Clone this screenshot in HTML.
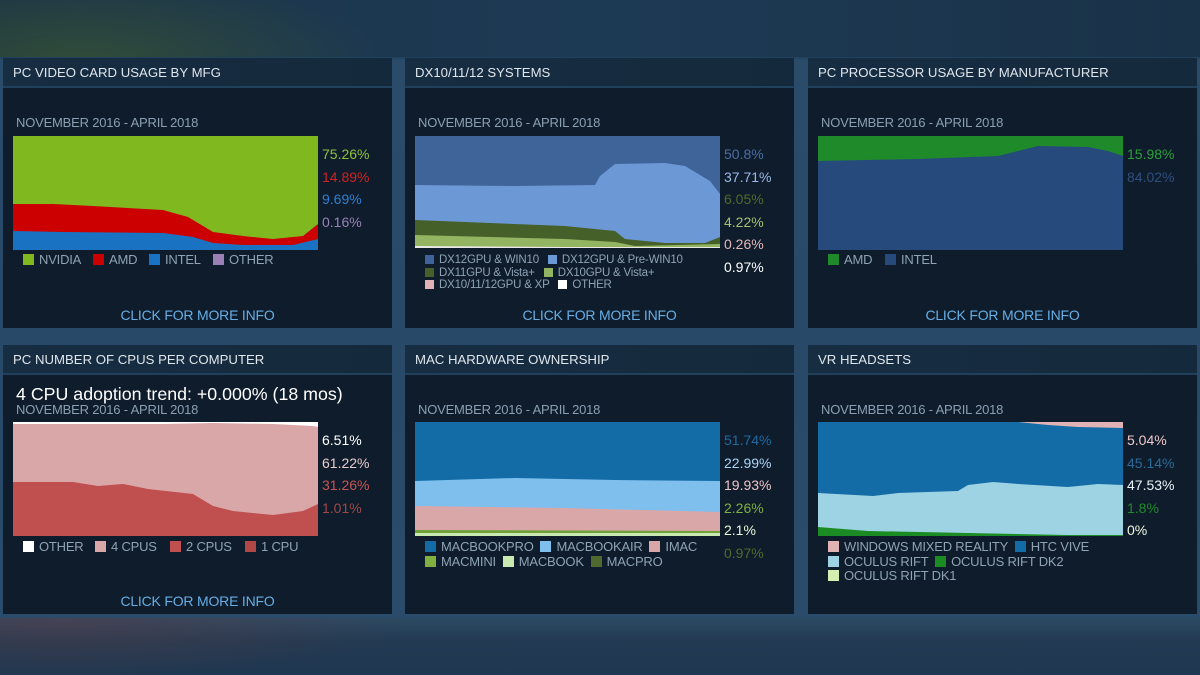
<!DOCTYPE html>
<html><head><meta charset="utf-8">
<style>
*{margin:0;padding:0;box-sizing:border-box}
html,body{width:1200px;height:675px;overflow:hidden}
body{font-family:"Liberation Sans",sans-serif;position:relative;
background:linear-gradient(180deg,#1a3247 0px,#1c3a54 56px,#2a4c6a 60px,#284a68 340px,#2a4c6a 620px,#253e56 640px,#1f3650 675px);}
.topbg{position:absolute;left:0;top:0;width:1200px;height:57px;background:radial-gradient(ellipse 300px 90px at 80px 60px,rgba(70,100,40,.5),rgba(0,0,0,0)),linear-gradient(90deg,#1b3348,#1d3a55 50%,#1a3248)}
.botbg{position:absolute;left:0;top:618px;width:1200px;height:57px;background:radial-gradient(ellipse 350px 60px at 60px 0px,rgba(90,60,70,.55),rgba(0,0,0,0)),linear-gradient(180deg,#2c4a64,#223a52 40%,#1f3750)}
.p{position:absolute;background:#0f1c2b;width:389px}
.h{position:absolute;left:0;top:0;width:100%;height:30px;background:linear-gradient(90deg,#172d42,#15293c);border-bottom:2px solid #21405c;color:#dfe6ec;font-size:13.2px;line-height:30px;padding-left:10px}
.d{position:absolute;left:13px;font-size:13px;color:#8aa0b2;line-height:16px;letter-spacing:-0.2px}
.c{position:absolute;left:10px;width:305px;height:114px}
.l{position:absolute;left:319px;font-size:14px;line-height:22.5px}
.lg{position:absolute;font-size:13px;color:#8ea3b4;white-space:nowrap;line-height:14px;letter-spacing:-0.2px}
.lg i{display:inline-block;width:11px;height:11px;margin-right:5px;vertical-align:-1px}
.k{position:absolute;left:0;width:100%;text-align:center;font-size:14px;color:#66aee6;line-height:16px;letter-spacing:-0.2px}
.t{position:absolute;left:13px;top:39px;font-size:17.8px;color:#fff;line-height:20px}
</style></head><body>
<div class="topbg"></div><div class="botbg"></div>

<!-- Panel 1 -->
<div class="p" style="left:3px;top:58px;height:270px">
<div class="h">PC VIDEO CARD USAGE BY MFG</div>
<div class="d" style="top:57px">NOVEMBER 2016 - APRIL 2018</div>
<svg class="c" style="top:78px" viewBox="0 0 305 114" preserveAspectRatio="none">
<rect width="305" height="114" fill="#7fb81f"/>
<path d="M0,68 L40,68 80,70 150,74 175,81 200,96 230,100 260,103 290,100 305,88 L305,114 0,114Z" fill="#cc0000"/>
<path d="M0,95 L50,96 150,97 180,101 200,107 230,109 280,109 305,103 L305,114 0,114Z" fill="#1a73c2"/>
</svg>
<div class="l" style="top:85px"><div style="color:#8fc33a">75.26%</div><div style="color:#d42020">14.89%</div><div style="color:#2f7fd0">9.69%</div><div style="color:#9783b8">0.16%</div></div>
<div class="lg" style="left:20px;top:195px"><i style="background:#7fb81f"></i>NVIDIA</div>
<div class="lg" style="left:90px;top:195px"><i style="background:#cc0000"></i>AMD</div>
<div class="lg" style="left:146px;top:195px"><i style="background:#1a73c2"></i>INTEL</div>
<div class="lg" style="left:210px;top:195px"><i style="background:#9b80b8"></i>OTHER</div>
<div class="k" style="top:249px">CLICK FOR MORE INFO</div>
</div>

<!-- Panel 2 -->
<div class="p" style="left:405px;top:58px;height:270px">
<div class="h">DX10/11/12 SYSTEMS</div>
<div class="d" style="top:57px">NOVEMBER 2016 - APRIL 2018</div>
<svg class="c" style="top:78px;height:112px" viewBox="0 0 305 112" preserveAspectRatio="none">
<rect width="305" height="112" fill="#3e649a"/>
<path d="M0,49 L100,50 180,49 185,40 200,28 250,27 270,30 295,45 305,58 L305,112 0,112Z" fill="#6d98d6"/>
<path d="M0,84 L150,90 200,95 210,103 250,107 290,107 305,101 L305,112 0,112Z" fill="#46602a"/>
<path d="M0,99 L150,103 200,106 220,110 305,108 L305,112 0,112Z" fill="#93b562"/>
<path d="M0,110 L150,111 305,111 L305,112 0,112Z" fill="#e8e8e8"/>
</svg>
<div class="l" style="top:85px"><div style="color:#4a6ea3">50.8%</div><div style="color:#9ab8e8">37.71%</div><div style="color:#4f6a2e">6.05%</div><div style="color:#a0c070">4.22%</div><div style="color:#e2b8ba">0.26%</div><div style="color:#ffffff">0.97%</div></div>
<div class="lg" style="left:20px;top:196px;font-size:11.5px;line-height:12.5px">
<div><i style="background:#3e649a;width:9px;height:9px"></i>DX12GPU &amp; WIN10 &nbsp;&nbsp;<i style="background:#6d98d6;width:9px;height:9px"></i>DX12GPU &amp; Pre-WIN10</div>
<div><i style="background:#46602a;width:9px;height:9px"></i>DX11GPU &amp; Vista+ &nbsp;&nbsp;<i style="background:#93b562;width:9px;height:9px"></i>DX10GPU &amp; Vista+</div>
<div><i style="background:#e2b3b5;width:9px;height:9px"></i>DX10/11/12GPU &amp; XP &nbsp;&nbsp;<i style="background:#fff;width:9px;height:9px"></i>OTHER</div>
</div>
<div class="k" style="top:249px">CLICK FOR MORE INFO</div>
</div>

<!-- Panel 3 -->
<div class="p" style="left:808px;top:58px;height:270px">
<div class="h">PC PROCESSOR USAGE BY MANUFACTURER</div>
<div class="d" style="top:57px">NOVEMBER 2016 - APRIL 2018</div>
<svg class="c" style="top:78px" viewBox="0 0 305 114" preserveAspectRatio="none">
<rect width="305" height="114" fill="#1f8a2a"/>
<path d="M0,25 L100,23 180,20 200,15 220,10 270,11 290,15 305,20 L305,114 0,114Z" fill="#264a7c"/>
</svg>
<div class="l" style="top:85px"><div style="color:#2aa03a">15.98%</div><div style="color:#2e4f80">84.02%</div></div>
<div class="lg" style="left:20px;top:195px"><i style="background:#1f8a2a"></i>AMD</div>
<div class="lg" style="left:77px;top:195px"><i style="background:#264a7c"></i>INTEL</div>
<div class="k" style="top:249px">CLICK FOR MORE INFO</div>
</div>

<!-- Panel 4 -->
<div class="p" style="left:3px;top:345px;height:269px">
<div class="h">PC NUMBER OF CPUS PER COMPUTER</div>
<div class="t">4 CPU adoption trend: +0.000% (18 mos)</div>
<div class="d" style="top:57px">NOVEMBER 2016 - APRIL 2018</div>
<svg class="c" style="top:77px" viewBox="0 0 305 114" preserveAspectRatio="none">
<rect width="305" height="114" fill="#ffffff"/>
<path d="M0,2 L150,2 200,1 260,2 300,4 305,5 L305,114 0,114Z" fill="#d9a7a7"/>
<path d="M0,60 L60,60 85,64 110,62 135,67 180,72 200,84 220,89 260,93 290,89 305,82 L305,114 0,114Z" fill="#c05050"/>
</svg>
<div class="l" style="top:84px"><div style="color:#ffffff">6.51%</div><div style="color:#e6cccc">61.22%</div><div style="color:#c85555">31.26%</div><div style="color:#a04848">1.01%</div></div>
<div class="lg" style="left:20px;top:195px"><i style="background:#fff"></i>OTHER</div>
<div class="lg" style="left:92px;top:195px"><i style="background:#d9a7a7"></i>4 CPUS</div>
<div class="lg" style="left:167px;top:195px"><i style="background:#c05050"></i>2 CPUS</div>
<div class="lg" style="left:242px;top:195px"><i style="background:#b04848"></i>1 CPU</div>
<div class="k" style="top:248px">CLICK FOR MORE INFO</div>
</div>

<!-- Panel 5 -->
<div class="p" style="left:405px;top:345px;height:269px">
<div class="h">MAC HARDWARE OWNERSHIP</div>
<div class="d" style="top:57px">NOVEMBER 2016 - APRIL 2018</div>
<svg class="c" style="top:77px" viewBox="0 0 305 114" preserveAspectRatio="none">
<rect width="305" height="114" fill="#136ca6"/>
<path d="M0,59 L100,56 200,58 305,59 L305,114 0,114Z" fill="#7ebfee"/>
<path d="M0,84 L150,86 305,90 L305,114 0,114Z" fill="#d9a7a7"/>
<path d="M0,108 L305,109 L305,114 0,114Z" fill="#6fa03a"/>
<path d="M0,111 L305,111 L305,114 0,114Z" fill="#c8eab0"/>
</svg>
<div class="l" style="top:84px"><div style="color:#1f6aa0">51.74%</div><div style="color:#a8d4f4">22.99%</div><div style="color:#ecc4c6">19.93%</div><div style="color:#7fb040">2.26%</div><div style="color:#e8f8d8">2.1%</div><div style="color:#4f6a2e">0.97%</div></div>
<div class="lg" style="left:20px;top:195px;line-height:14.5px">
<div><i style="background:#136ca6"></i>MACBOOKPRO &nbsp;<i style="background:#7ebfee"></i>MACBOOKAIR &nbsp;<i style="background:#d9a7a7"></i>IMAC</div>
<div><i style="background:#7fb040"></i>MACMINI &nbsp;<i style="background:#c8eab0"></i>MACBOOK &nbsp;<i style="background:#4f6a2e"></i>MACPRO</div>
</div>
</div>

<!-- Panel 6 -->
<div class="p" style="left:808px;top:345px;height:269px">
<div class="h">VR HEADSETS</div>
<div class="d" style="top:57px">NOVEMBER 2016 - APRIL 2018</div>
<svg class="c" style="top:77px" viewBox="0 0 305 114" preserveAspectRatio="none">
<rect width="305" height="114" fill="#e1b3b5"/>
<path d="M0,0 L200,0 230,3 260,5 305,6 L305,114 0,114Z" fill="#136ca6"/>
<path d="M0,71 L55,74 80,71 140,69 150,63 175,60 200,62 250,65 280,62 305,63 L305,114 0,114Z" fill="#9ed3e4"/>
<path d="M0,105 L50,109 150,111 250,113 305,113 L305,114 0,114Z" fill="#1b8c24"/>
</svg>
<div class="l" style="top:84px"><div style="color:#f0c8ca">5.04%</div><div style="color:#2a6a9a">45.14%</div><div style="color:#e8f4f8">47.53%</div><div style="color:#1f8a2a">1.8%</div><div style="color:#f0fae0">0%</div></div>
<div class="lg" style="left:20px;top:195px;line-height:14.5px">
<div><i style="background:#e1b3b5"></i>WINDOWS MIXED REALITY &nbsp;<i style="background:#136ca6"></i>HTC VIVE</div>
<div><i style="background:#9ed3e4"></i>OCULUS RIFT &nbsp;<i style="background:#1b8c24"></i>OCULUS RIFT DK2</div>
<div><i style="background:#d4eeb0"></i>OCULUS RIFT DK1</div>
</div>
</div>
</body></html>
